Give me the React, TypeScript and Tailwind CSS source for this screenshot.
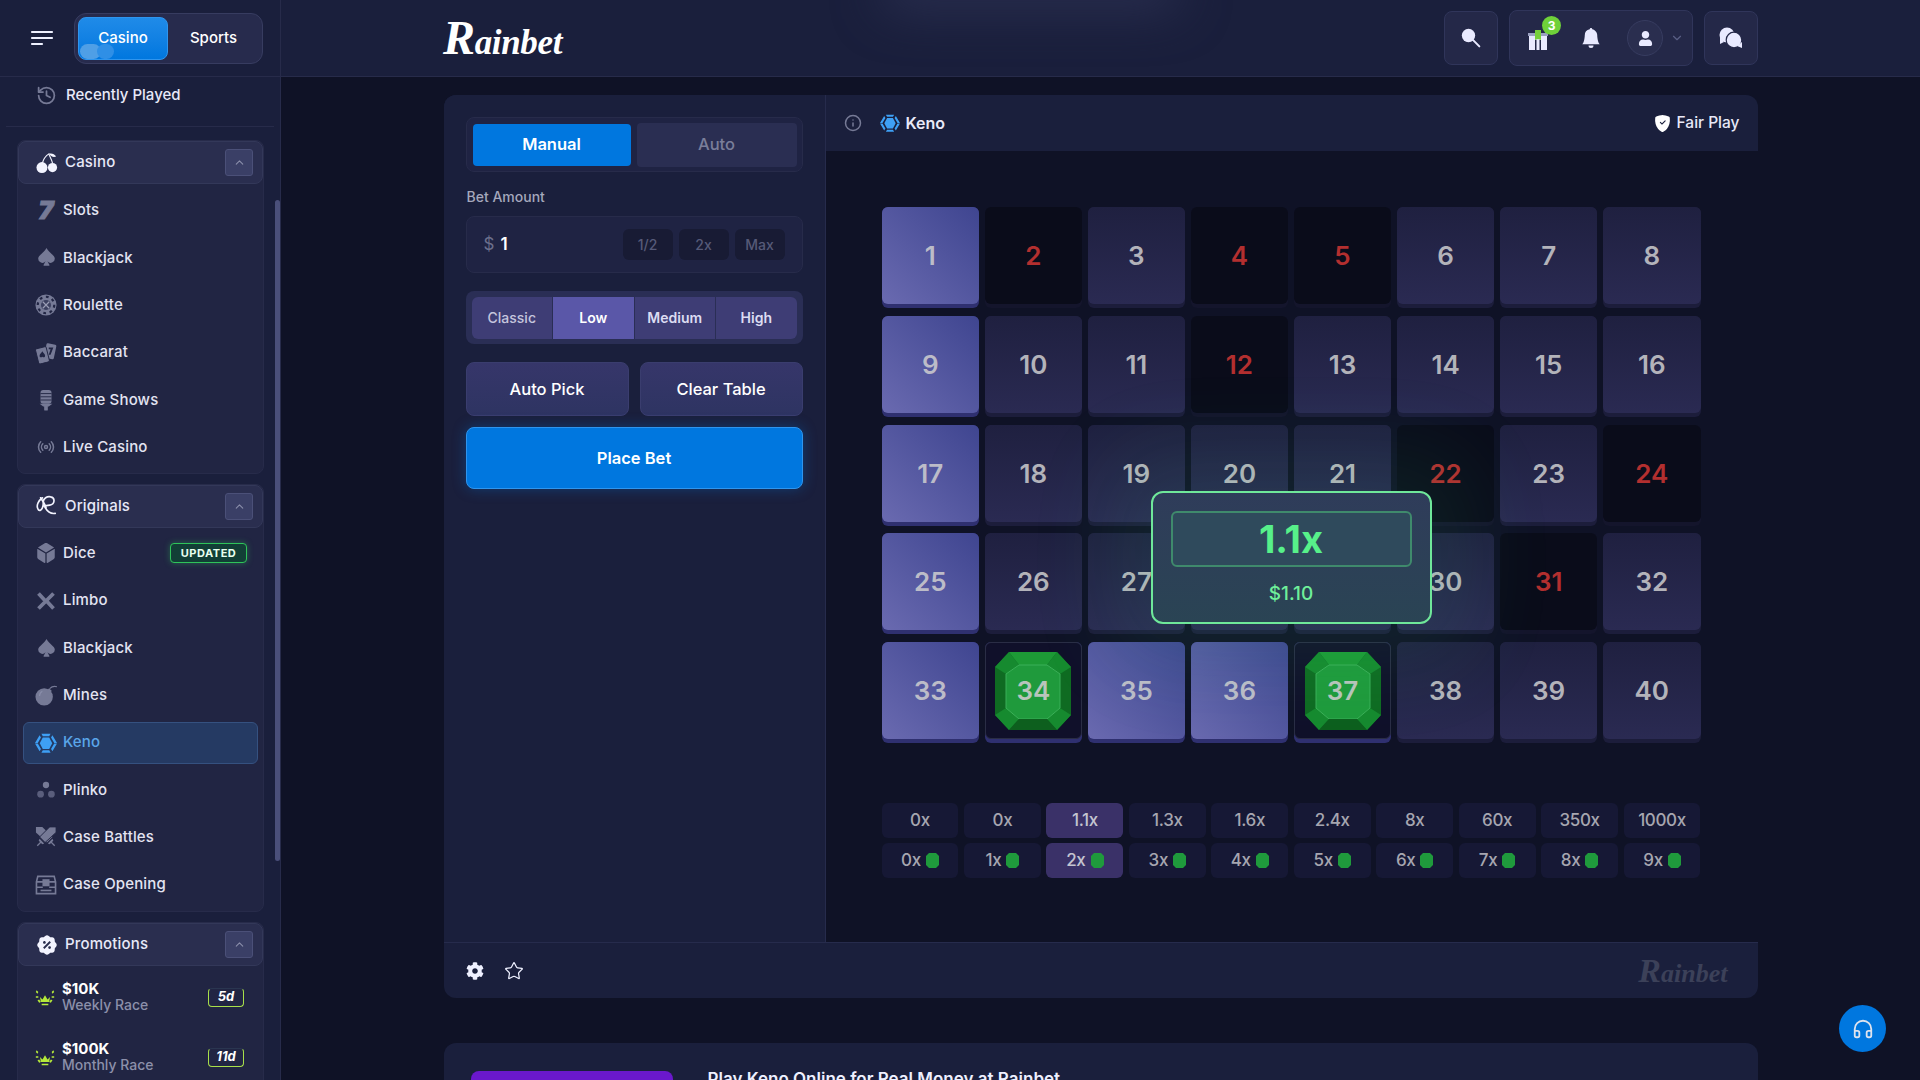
import type { ReactNode } from "react";
import { ChevronDown, ChevronUp, Headphones, History, Info, Radio, Star } from "lucide-react";
import {
  BsBellFill,
  BsShieldFillCheck,
  BsSuitSpadeFill,
} from "react-icons/bs";
import { FaCog, FaDiceD6, FaUser } from "react-icons/fa";
import { RiDiscountPercentFill } from "react-icons/ri";

const font = { fontFamily: "Inter, 'Noto Sans', sans-serif" };

const SELECTED = [1, 9, 17, 25, 33, 35, 36];
const MISSES = [2, 4, 5, 12, 22, 24, 31];
const HITS = [34, 37];

const PAYOUTS = ["0x", "0x", "1.1x", "1.3x", "1.6x", "2.4x", "8x", "60x", "350x", "1000x"];
const HIT_COUNTS = ["0x", "1x", "2x", "3x", "4x", "5x", "6x", "7x", "8x", "9x"];

function KenoIcon({ size = 22 }: { size?: number }) {
  return (
    <svg width={size} height={size} viewBox="0 0 24 24" className="shrink-0">
      <path d="M7 2h10l-1.500 2.500h-7zM19 3.500L24 12l-3 0-3.500-6zM5 3.500L0 12l3 0 3.500-6zM0 12.500l3 0 3.500 6L5 21zM24 12.500l-3 0-3.500 6L19 21zM8.500 20h7L17 22.500H7z" fill="#3ea0f5" />
      <path d="M8.500 6h7l3.300 6.200L15.500 18.500h-7L5.200 12.200z" fill="#3ea0f5" />
    </svg>
  );
}

function CherryIcon() {
  return (
    <svg width="22" height="22" viewBox="0 0 24 24" className="shrink-0">
      <circle cx="6.500" cy="17" r="6" fill="#f3f4ff" />
      <circle cx="18" cy="17" r="5" fill="#f3f4ff" />
      <path d="M7 12c1-4 4-8 7-10 1 3 3 6 4 10" fill="none" stroke="#f3f4ff" strokeWidth="1.200" />
      <path d="M14 2c3-1 6 0 8 3-3 1-6 0-8-3z" fill="#f3f4ff" />
    </svg>
  );
}

function CardsIcon() {
  return (
    <svg width="22" height="22" viewBox="0 0 24 24" className="shrink-0">
      <rect x="11" y="2" width="11" height="16" rx="1.500" transform="rotate(12 16 10)" fill="#767a96" />
      <path d="M15 6h5l-3 8h-2l2-6h-2z" fill="#212543" />
      <rect x="2" y="6" width="12" height="17" rx="1.500" transform="rotate(-14 8 14)" fill="#767a96" stroke="#212543" strokeWidth="1" />
      <path d="M8 10c1 2 3 3 3 5 0 2-2 2-3 1-1 1-3 1-3-1 0-2 2-3 3-5z" fill="#212543" />
    </svg>
  );
}

function MicIcon() {
  return (
    <svg width="20" height="22" viewBox="0 0 20 24" className="shrink-0">
      <rect x="4" y="1" width="12" height="15" rx="3" fill="#767a96" />
      <path d="M4 5h12M4 8.500h12M4 12h12" stroke="#212543" strokeWidth="1" />
      <path d="M3 16h14l-4 3h-6z" fill="#767a96" />
      <rect x="8" y="18" width="4" height="5.500" rx="1" fill="#767a96" />
    </svg>
  );
}

function LimboIcon() {
  return (
    <svg width="20" height="20" viewBox="0 0 24 24" fill="none" stroke="#767a96" strokeWidth="4.500" className="shrink-0">
      <path d="M3 3l7.500 8M21 21l-7.500-8M21 3L3 21" />
    </svg>
  );
}

function BombIcon() {
  return (
    <svg width="22" height="22" viewBox="0 0 24 24" className="shrink-0">
      <circle cx="10" cy="14" r="9.500" fill="#767a96" />
      <path d="M14 6l3 3" stroke="#767a96" strokeWidth="4" />
      <path d="M16 5c2-2 5-3 8-2" fill="none" stroke="#767a96" strokeWidth="1.200" />
      <path d="M5 13c0-2 1-4 3-5" fill="none" stroke="#8a8eaa" strokeWidth="1.200" />
    </svg>
  );
}

function PlinkoIcon() {
  return (
    <svg width="20" height="20" viewBox="0 0 24 24" fill="#5a5e7c" className="shrink-0">
      <circle cx="12" cy="6" r="3.800" fill="#767a96" />
      <circle cx="5.500" cy="17" r="4" />
      <circle cx="18.500" cy="17" r="4" />
    </svg>
  );
}

function RouletteIcon() {
  return (
    <svg width="22" height="22" viewBox="0 0 24 24" className="shrink-0">
      <circle cx="12" cy="12" r="11.500" fill="#767a96" />
      <circle cx="12" cy="12" r="9" fill="none" stroke="#212543" strokeWidth="2.400" strokeDasharray="3 4" />
      <circle cx="12" cy="12" r="5.500" fill="#3c4060" />
      <path d="M8.500 8.500l7 7M15.500 8.500l-7 7" stroke="#9a9db5" strokeWidth="1.300" />
    </svg>
  );
}

function SwordsIcon() {
  return (
    <svg width="22" height="22" viewBox="0 0 24 24" className="shrink-0">
      <path d="M1 1h7l11 11-6 6L1 7z" fill="#767a96" />
      <path d="M23 1h-7L5 12l6 6L23 7z" fill="#767a96" stroke="#212543" strokeWidth="1" />
      <path d="M5 14l5 5-2 1-1.500-1.500L3 22l-1-1 3.500-3.500L4 16zM19 14l-5 5 2 1 1.500-1.500L21 22l1-1-3.500-3.500L20 16z" fill="#767a96" />
    </svg>
  );
}

function ChestIcon() {
  return (
    <svg width="22" height="20" viewBox="0 0 24 22" fill="none" stroke="#767a96" strokeWidth="1.800" className="shrink-0">
      <path d="M1.500 7.500h21M3 1.500h18l1.500 6v13h-21v-13zM1.500 13.500h7M15.500 13.500h7" />
      <rect x="9" y="5.500" width="6" height="6" fill="#767a96" />
      <path d="M6 17h12" />
    </svg>
  );
}

function RaceIcon() {
  return (
    <svg width="20" height="20" viewBox="0 0 24 24" fill="#b5ea3a" className="shrink-0">
      <path d="M6 12l3 3 3-5 3 5 3-3-1 6H7z" />
      <path d="M2 4l2 2-1 2-2-2zM22 4l-2 2 1 2 2-2zM1 11h3v2H1zM23 11h-3v2h3zM3 16l2-1 2 3-2 1zM21 16l-2-1-2 3 2 1zM8 20h8v2H8z" />
    </svg>
  );
}

function OriginalsIcon() {
  return (
    <svg width="22" height="22" viewBox="0 0 24 24" fill="none" stroke="#f3f4ff" strokeWidth="1.800" strokeLinecap="round" className="shrink-0">
      <path d="M7 3C3 6 0 11 2 15c1 3 4 2 5-1 1-2 1-4 1-7 0-3 4-6 8-5 5 1 5 8-1 9l-6 1c2 4 6 9 12 8" />
      <path d="M5 3c2 3 5 7 6 11" />
    </svg>
  );
}

function Emerald() {
  return (
    <svg width="76" height="78" viewBox="0 0 76 78" className="absolute">
      <path d="M14 0h48l14 15v48L62 78H14L0 63V15z" fill="#0f6b22" />
      <path d="M14 0h48L52 13H24z" fill="#1d9a36" />
      <path d="M62 0l14 15-11 7-13-9z" fill="#168a2f" />
      <path d="M14 0L0 15l11 7 13-9z" fill="#168a2f" />
      <path d="M62 78l14-15-11-7-13 11zM14 78L0 63l11-7 13 11z" fill="#168a2f" />
      <path d="M24 13h28l13 9v34l-13 11H24L11 56V22z" fill="#1f9a3c" stroke="#3bb058" strokeWidth="1" />
      <path d="M24 67h28l10 11H14z" fill="#0d5f1e" />
    </svg>
  );
}

function TinyGem() {
  return (
    <svg width="13" height="15" viewBox="0 0 13 15" className="shrink-0">
      <path d="M3 0h7l3 3v9l-3 3H3l-3-3V3z" fill="#1f9a3c" />
    </svg>
  );
}

function Logo({ className, big }: { className: string; big: string }) {
  return (
    <span className={className} style={{ fontFamily: "'Liberation Serif', serif" }}>
      <span className={big}>R</span>ainbet
    </span>
  );
}

function SideHeader({ icon, label }: { icon: ReactNode; label: string }) {
  return (
    <div className="flex h-[43px] items-center justify-between rounded-lg border border-[#333859] bg-[#2a2e4f] pl-[17px] pr-[9px]">
      <div className="flex items-center gap-[7px]">
        <span className="flex w-[22px] justify-center text-[#f3f4ff]">{icon}</span>
        <span className="text-[15px] font-medium tracking-[0.01em] text-[#e8e9f8]">{label}</span>
      </div>
      <span className="flex h-[27px] w-[28px] items-center justify-center rounded-[3px] border border-[#4b5078] bg-[#3a3f66] text-[#8a8eaa]">
        <ChevronUp size={13} />
      </span>
    </div>
  );
}

function SideItem({ icon, label, active, badge }: { icon: ReactNode; label: string; active?: boolean; badge?: boolean }) {
  return (
    <div className="flex h-[47.300px] items-center px-[5px]">
      <div
        className={
          active
            ? "flex h-[42px] w-full items-center gap-[6px] rounded-md border border-[#355180] bg-[#253a63] pl-[11px] pr-[10px]"
            : "flex h-[42px] w-full items-center gap-[6px] border border-transparent pl-[11px] pr-[10px]"
        }
      >
        <span className="flex w-[22px] justify-center text-[#767a96]">{icon}</span>
        <span className={active ? "text-[15px] font-medium tracking-[0.01em] text-[#5aa6ea]" : "text-[15px] font-medium tracking-[0.01em] text-[#e3e4f2]"}>
          {label}
        </span>
        {badge && (
          <span className="ml-auto flex h-[20px] w-[77px] items-center justify-center rounded-[4px] border border-[#2fc45a] bg-[#123f36] text-[11px] font-bold tracking-[0.05em] text-[#e8fff0] shadow-[0_0_6px_rgba(47,196,90,0.4)]">
            UPDATED
          </span>
        )}
      </div>
    </div>
  );
}

function RaceItem({ amount, label, days }: { amount: string; label: string; days: string }) {
  return (
    <div className="flex h-[60px] items-center pl-[17px] pr-[19px]">
      <RaceIcon />
      <div className="ml-[7px] flex flex-col leading-[16px]">
        <span className="text-[15px] font-bold text-white">{amount}</span>
        <span className="text-[14px] font-medium text-[#8c90aa]">{label}</span>
      </div>
      <span className="ml-auto flex h-[19px] w-[36px] items-center justify-center rounded-[4px] border border-b-[#a8e04a] border-l-[#a8e04a] border-r-[#a8e04a] border-t-[#2a3550] text-[13px] font-bold italic text-white">
        {days}
      </span>
    </div>
  );
}

function Sidebar() {
  return (
    <aside className="relative flex h-screen w-[281px] shrink-0 flex-col overflow-hidden border-r border-[#272b4a] bg-[#1a1f3c]">
      <div className="flex h-[77px] shrink-0 items-center border-b border-[#272b4a] pl-[30px]">
        <svg width="24" height="16" viewBox="0 0 24 16" fill="none" stroke="#eef0ff" strokeWidth="2.200" strokeLinecap="round">
          <path d="M2 2h20M2 8h20M2 14h10" />
        </svg>
        <div className="ml-[20px] flex h-[51px] w-[189px] items-center rounded-xl border border-[#373c60] bg-[#272b4d] p-[3px]">
          <div className="relative flex h-[43px] w-[90px] items-center justify-center overflow-hidden rounded-lg border border-[#2f95ee] bg-gradient-to-b from-[#1f8be8] to-[#0077df] text-[15px] font-medium text-white">
            <span className="absolute bottom-0 left-[1px] h-[15px] w-[21px] rounded-full bg-[#4f9fe6]" />
            <span className="absolute bottom-0 left-[18px] h-[15px] w-[17px] rounded-full bg-[#2f8fe6]" />
            <span className="relative">Casino</span>
          </div>
          <span className="flex-1 text-center text-[15px] font-medium text-white">Sports</span>
        </div>
      </div>
      <div className="mx-[6px] flex h-[50px] shrink-0 items-center gap-[9px] border-b border-[#272b4a] pb-[12px] pl-[30px]">
        <History size={21} className="text-[#767a96]" />
        <span className="text-[15px] font-medium text-[#e8e9f8]">Recently Played</span>
      </div>
      <div className="ml-[17px] mt-[13px] flex w-[247px] flex-col gap-[10px] self-start">
        <section className="rounded-lg border border-[#272b4a] bg-[#212543] pb-[2px]">
          <SideHeader icon={<CherryIcon />} label="Casino" />
          <div className="pt-[3px]">
            <SideItem icon={<span className="text-[25px] font-black italic leading-none [-webkit-text-stroke:1px_#767a96]">7</span>} label="Slots" />
            <SideItem icon={<BsSuitSpadeFill size={19} />} label="Blackjack" />
            <SideItem icon={<RouletteIcon />} label="Roulette" />
            <SideItem icon={<CardsIcon />} label="Baccarat" />
            <SideItem icon={<MicIcon />} label="Game Shows" />
            <SideItem icon={<Radio size={18} />} label="Live Casino" />
          </div>
        </section>
        <section className="rounded-lg border border-[#272b4a] bg-[#212543] pb-[3px]">
          <SideHeader icon={<OriginalsIcon />} label="Originals" />
          <div className="pt-[2px]">
            <SideItem icon={<FaDiceD6 size={20} />} label="Dice" badge />
            <SideItem icon={<LimboIcon />} label="Limbo" />
            <SideItem icon={<BsSuitSpadeFill size={19} />} label="Blackjack" />
            <SideItem icon={<BombIcon />} label="Mines" />
            <SideItem icon={<KenoIcon />} label="Keno" active />
            <SideItem icon={<PlinkoIcon />} label="Plinko" />
            <SideItem icon={<SwordsIcon />} label="Case Battles" />
            <SideItem icon={<ChestIcon />} label="Case Opening" />
          </div>
        </section>
        <section className="rounded-lg border border-[#272b4a] bg-[#212543] pb-[5px]">
          <SideHeader icon={<RiDiscountPercentFill size={22} />} label="Promotions" />
          <div className="pt-[1px]">
            <RaceItem amount="$10K" label="Weekly Race" days="5d" />
            <RaceItem amount="$100K" label="Monthly Race" days="11d" />
          </div>
        </section>
      </div>
      <div className="absolute left-[275px] top-[200px] h-[661px] w-[5px] rounded-full bg-[#4a4f7a]" />
    </aside>
  );
}

function Topbar() {
  return (
    <header className="relative flex h-[77px] shrink-0 items-center justify-between overflow-hidden border-b border-[#272b4a] bg-[#1a1f3c] pl-[162px] pr-[162px]">
      <div className="absolute left-[600px] top-[-30px] h-[40px] w-[300px] rounded-full bg-[#2a2f50] blur-xl" />
      <Logo
        className="relative text-[35px] font-bold italic leading-none tracking-[-0.01em] text-white"
        big="text-[48px]"
      />
      <div className="relative flex items-center gap-[11px]">
        <div className="flex h-[54px] w-[54px] items-center justify-center rounded-lg border border-[#30355a] bg-[#242848]">
          <svg width="20" height="20" viewBox="0 0 24 24">
            <path d="M14 14l8 8" stroke="#e9eaff" strokeWidth="2.400" strokeLinecap="round" />
            <circle cx="9" cy="9" r="8" fill="#e9eaff" />
          </svg>
        </div>
        <div className="relative flex h-[56px] w-[184px] items-center rounded-lg border border-[#30355a] bg-[#242848] pl-[18px]">
          <svg width="20" height="24" viewBox="0 0 20 24" className="shrink-0">
            <path d="M1 10h18v14H1z" fill="#e9eaff" />
            <path d="M0 7h20v3H0z" fill="#9aa0c0" />
            <path d="M7 4h6v10l-3-1-3 1z" fill="#76d13a" />
            <path d="M7 14h1.500v10H7zM11.500 14H13v10h-1.500z" fill="#242848" />
          </svg>
          <span className="absolute left-[32px] top-[5px] flex h-[19px] w-[19px] items-center justify-center rounded-full bg-[#6fd13a] text-[12px] font-bold text-white">3</span>
          <BsBellFill size={20} className="ml-[33px] shrink-0 text-[#e9eaff]" />
          <span className="ml-[26px] flex h-[36px] w-[36px] shrink-0 items-center justify-center rounded-full border border-[#373c60] bg-[#2a2e4f]">
            <FaUser size={15} className="text-[#e9eaff]" />
          </span>
          <ChevronDown size={14} className="ml-[7px] text-[#5a5f85]" />
        </div>
        <div className="flex h-[54px] w-[54px] items-center justify-center rounded-lg border border-[#30355a] bg-[#242848]">
          <svg width="24" height="22" viewBox="0 0 24 22" fill="#e9eaff">
            <circle cx="8" cy="8" r="7.500" />
            <path d="M1 10v7l4-2z" />
            <circle cx="15" cy="13" r="7.800" stroke="#242848" strokeWidth="1.200" />
            <path d="M23 15v6l-5-2z" />
          </svg>
        </div>
      </div>
    </header>
  );
}

function BetPanel() {
  return (
    <div className="flex w-[382px] shrink-0 flex-col border-r border-[#262b4c] bg-[#1a1f3c] px-[22px] pt-[22px]">
      <div className="flex h-[55px] items-center gap-[6px] rounded-lg border border-[#272b4a] bg-[#1f2343] pl-[6px] pr-[5px]">
        <div className="flex h-[42px] w-[158px] items-center justify-center rounded-[4px] bg-[#0077df] text-[16.500px] font-semibold text-white">Manual</div>
        <div className="flex h-[44px] flex-1 items-center justify-center rounded-[4px] bg-[#2a2e52] text-[16.500px] font-medium text-[#7a7e9a]">Auto</div>
      </div>
      <label className="mb-[11px] mt-[17px] pl-[1px] text-[14px] font-medium leading-[16px] text-[#a5a8bd]">Bet Amount</label>
      <div className="flex h-[57px] items-center rounded-lg border border-[#272b4a] bg-[#1f2343] pl-[17px] pr-[17px]">
        <span className="text-[17px] text-[#6b6f8c]">$</span>
        <span className="ml-[6px] text-[17px] font-semibold text-white">1</span>
        <div className="ml-auto flex gap-[6px]">
          {["1/2", "2x", "Max"].map((chip) => (
            <span key={chip} className="flex h-[31px] w-[50px] items-center justify-center rounded-md bg-[#181b34] text-[14px] font-medium text-[#565a78]">
              {chip}
            </span>
          ))}
        </div>
      </div>
      <div className="mt-[18px] flex h-[53px] items-center gap-[1px] rounded-lg bg-[#2a2e55] px-[6px]">
        {["Classic", "Low", "Medium", "High"].map((risk, i) => (
          <div
            key={risk}
            className={
              i === 1
                ? "flex h-[42px] flex-1 items-center justify-center bg-[#5a57a8] text-[14px] font-semibold text-white"
                : i === 0
                  ? "flex h-[42px] flex-1 items-center justify-center rounded-l-md bg-[#3e3d75] text-[14px] font-medium text-[#c5c5dd]"
                  : i === 3
                    ? "flex h-[42px] flex-1 items-center justify-center rounded-r-md bg-[#3e3d75] text-[14px] font-semibold text-[#dcdcf2]"
                    : "flex h-[42px] flex-1 items-center justify-center bg-[#3e3d75] text-[14px] font-semibold text-[#dcdcf2]"
            }
          >
            {risk}
          </div>
        ))}
      </div>
      <div className="mt-[18px] flex gap-[11px]">
        {["Auto Pick", "Clear Table"].map((action) => (
          <button key={action} className="h-[54px] flex-1 rounded-lg border border-[#3a3d6e] bg-gradient-to-b from-[#36366a] to-[#2e3462] text-[16.500px] font-medium text-white">
            {action}
          </button>
        ))}
      </div>
      <button className="mt-[11px] h-[62px] rounded-lg border border-[#2f95ee] bg-[#0077df] text-[16.500px] font-semibold text-white shadow-[0_0_14px_rgba(0,119,223,0.35)]">
        Place Bet
      </button>
    </div>
  );
}

function Tile({ n }: { n: number }) {
  if (HITS.includes(n)) {
    return (
      <div className="h-[101px] rounded-md bg-[#2f3070] pb-[4px]">
        <div className="relative flex h-full items-center justify-center rounded-md border border-[#2a2d45] bg-[#10102a]">
          <Emerald />
          <span className="relative text-[26px] font-semibold text-[#b9c4bc]">{n}</span>
        </div>
      </div>
    );
  }
  if (MISSES.includes(n)) {
    return (
      <div className="h-[101px] rounded-md bg-[#14152c] pb-[4px]">
        <div className="flex h-full items-center justify-center rounded-md bg-[#0a0c1a] text-[26px] font-semibold text-[#b32f2f]">{n}</div>
      </div>
    );
  }
  if (SELECTED.includes(n)) {
    return (
      <div className="h-[101px] rounded-md bg-[#2f3070] pb-[4px]">
        <div className="flex h-full items-center justify-center rounded-md bg-gradient-to-tr from-[#6a6ab0] to-[#3f4590] text-[26px] font-semibold text-[#bcbcc8]">{n}</div>
      </div>
    );
  }
  return (
    <div className="h-[101px] rounded-md bg-[#1c1d3b] pb-[4px]">
      <div className="flex h-full items-center justify-center rounded-md bg-gradient-to-b from-[#1f2040] to-[#2a2a52] text-[26px] font-semibold text-[#b3b3ba]">{n}</div>
    </div>
  );
}

function KenoBoard() {
  const numbers = Array.from({ length: 40 }, (_, i) => i + 1);
  return (
    <div className="flex flex-1 flex-col bg-[#0f1226] pl-[56px] pr-[57px] pt-[56px]">
      <div className="relative grid grid-cols-8 gap-x-[5.600px] gap-y-[7.750px]">
        {numbers.map((n) => (
          <Tile key={n} n={n} />
        ))}
        <div className="absolute left-[269px] top-[284px] flex h-[133px] w-[281px] flex-col items-center rounded-xl border-2 border-[#6fe79a] bg-gradient-to-b from-[#2f3c5a] to-[#2a4454] px-[18px] pt-[18px] shadow-[0_0_90px_40px_rgba(60,220,130,0.09)]">
          <div className="flex h-[56px] w-full items-center justify-center rounded-md border-2 border-[#3f8a6c] bg-[#2f4a5c] text-[38px] font-bold text-[#57f08a]">1.1x</div>
          <div className="mt-[13px] text-[19px] font-medium text-[#6ff09a]">$1.10</div>
        </div>
      </div>
      <div className="mt-[60px] flex flex-col gap-[5px]">
        <div className="grid grid-cols-10 gap-x-[5.500px]">
          {PAYOUTS.map((value, i) => (
            <div key={i} className={i === 2 ? "flex h-[35px] items-center justify-center rounded-md bg-[#3a3168] text-[17px] font-medium tracking-[-0.02em] text-[#c4c4d0]" : "flex h-[35px] items-center justify-center rounded-md bg-[#161835] text-[17px] font-medium tracking-[-0.02em] text-[#a6a6b0]"}>
              {value}
            </div>
          ))}
        </div>
        <div className="grid grid-cols-10 gap-x-[5.500px]">
          {HIT_COUNTS.map((value, i) => (
            <div key={value} className={i === 2 ? "flex h-[35px] items-center justify-center gap-[5px] rounded-md bg-[#3a3168] text-[17px] font-medium tracking-[-0.02em] text-[#c4c4d0]" : "flex h-[35px] items-center justify-center gap-[5px] rounded-md bg-[#161835] text-[17px] font-medium tracking-[-0.02em] text-[#a6a6b0]"}>
              {value}
              <TinyGem />
            </div>
          ))}
        </div>
      </div>
    </div>
  );
}

function GameCard() {
  return (
    <div className="mx-auto flex h-[903px] w-[1314px] shrink-0 flex-col overflow-hidden rounded-xl bg-[#1a1f3c]">
      <div className="flex flex-1">
        <BetPanel />
        <div className="flex flex-1 flex-col">
          <div className="flex h-[56px] shrink-0 items-center pl-[18px] pr-[18px]">
            <Info size={18} className="text-[#767a96]" />
            <span className="ml-[18px]">
              <KenoIcon size={20} />
            </span>
            <span className="ml-[6px] text-[16px] font-semibold text-[#e8e9f8]">Keno</span>
            <BsShieldFillCheck size={17} className="ml-auto text-white" />
            <span className="ml-[6px] text-[15.500px] font-medium text-[#e8e9f8]">Fair Play</span>
          </div>
          <KenoBoard />
        </div>
      </div>
      <div className="flex h-[56px] shrink-0 items-center border-t border-[#262b4c] pl-[22px] pr-[30px]">
        <FaCog size={18} className="text-[#eef0ff]" />
        <Star size={20} strokeWidth={1.500} className="ml-[20px] text-[#eef0ff]" />
        <Logo
          className="ml-auto text-[26px] font-bold italic leading-none text-[#3c4159]"
          big="text-[34px]"
        />
      </div>
    </div>
  );
}

export default function App() {
  return (
    <div className="relative flex h-screen w-full overflow-hidden bg-[#0f1226]" style={font}>
      <Sidebar />
      <main className="flex min-w-0 flex-1 flex-col overflow-hidden">
        <Topbar />
        <div className="flex flex-col gap-[45px] pt-[18px]">
          <GameCard />
          <div className="mx-auto flex h-[200px] w-[1314px] shrink-0 gap-[35px] rounded-xl bg-[#1a1f3c] pl-[27px] pt-[28px]">
            <div className="h-[120px] w-[202px] rounded-lg bg-[#6a18cc]" />
            <h2 className="text-[17px] font-semibold leading-[16px] text-[#eef0ff]">Play Keno Online for Real Money at Rainbet</h2>
          </div>
        </div>
      </main>
      <button className="absolute left-[1839px] top-[1005px] flex h-[47px] w-[47px] items-center justify-center rounded-full bg-[#0077df] text-[#dfe3ee]">
        <Headphones size={22} />
      </button>
    </div>
  );
}
